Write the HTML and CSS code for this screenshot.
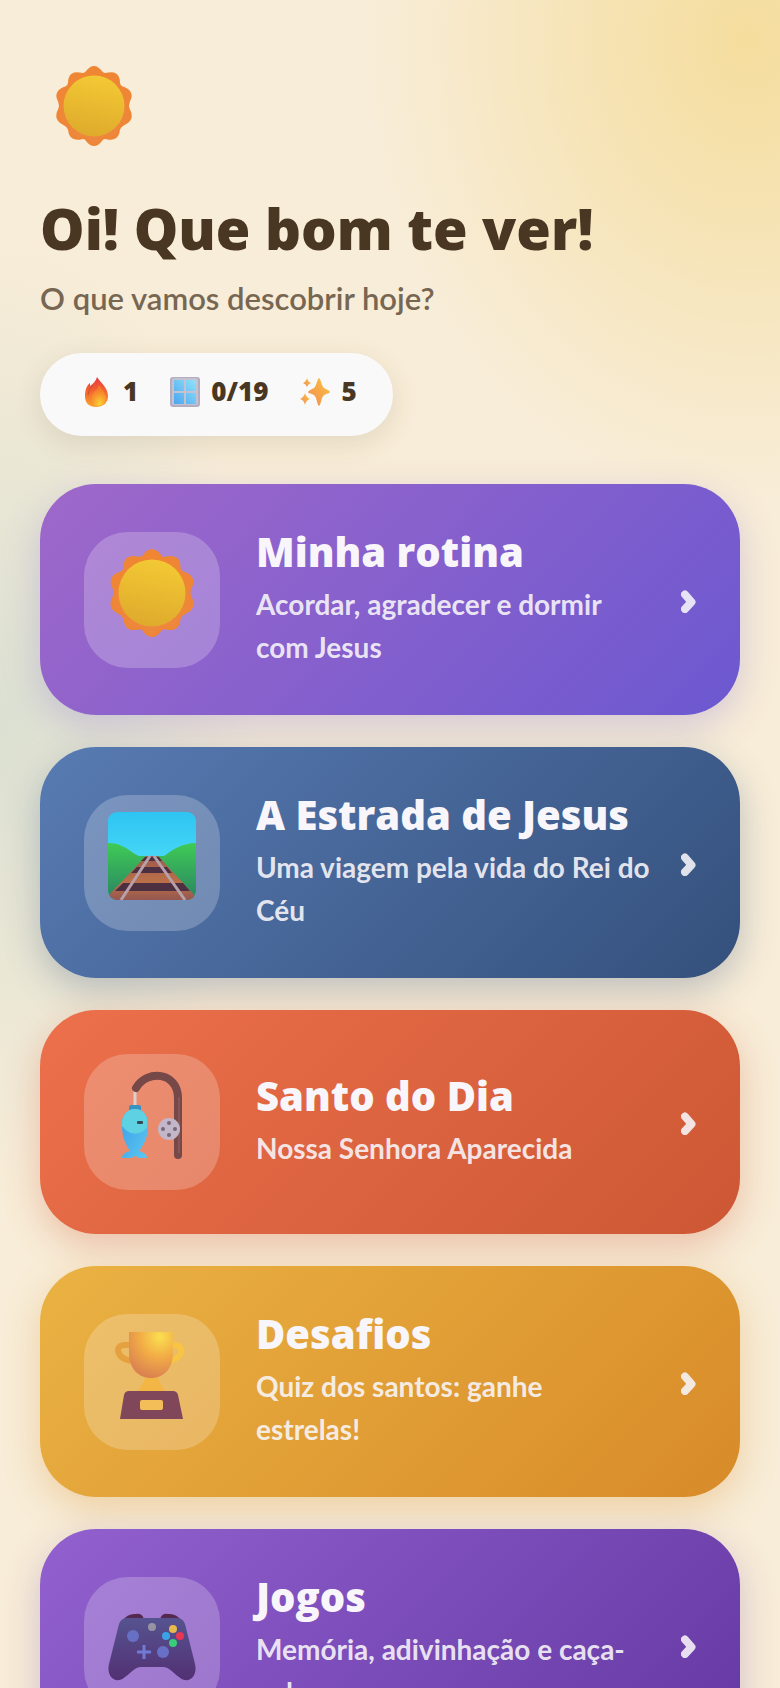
FILE: index.html
```
<!DOCTYPE html>
<html lang="pt-BR">
<head>
  <meta charset="UTF-8">
  <meta name="viewport" content="width=device-width, initial-scale=1.0">
  <title>Oi! Que bom te ver!</title>
  <link rel="stylesheet" href="styles.css">
</head>
<body>
  <!-- Shared icons -->
  <svg class="sprite" aria-hidden="true">
    <defs>
      <linearGradient id="sun-face" x1="0.6" y1="0" x2="0.4" y2="1">
        <stop offset="0" stop-color="#f3c934"/>
        <stop offset="1" stop-color="#dfaa2c"/>
      </linearGradient>
      <linearGradient id="sun-ray" x1="0" y1="0" x2="0" y2="1">
        <stop offset="0" stop-color="#f08632"/>
        <stop offset="1" stop-color="#ee873f"/>
      </linearGradient>
      <symbol id="icon-sun" viewBox="0 0 88 88">
        <path fill="url(#sun-ray)" stroke="#ef8636" stroke-width="3" stroke-linejoin="round" d="M36 7 Q44 -4 52 7 Q54 10 58 9 Q71 6 71 18 Q71 22 75 24 Q88 28 82 39 Q80 44 82 48 Q88 59 76 64 Q72 66 71 70 Q70 82 58 79 Q54 78 52 81 Q44 92 36 81 Q34 78 30 79 Q18 82 17 70 Q16 66 12 64 Q0 59 6 48 Q8 44 6 39 Q0 28 13 24 Q17 22 17 18 Q17 6 30 9 Q34 10 36 7 Z"/>
        <circle cx="44" cy="44" r="33.500" fill="url(#sun-face)"/>
      </symbol>
      <symbol id="icon-chevron" viewBox="0 0 16 28">
        <path d="M5 8.500 L11.500 16 L5 23" fill="none" stroke="currentColor" stroke-width="8" stroke-linecap="round" stroke-linejoin="round"/>
      </symbol>
    </defs>
  </svg>

  <main class="home">
    <header class="hero">
      <svg class="hero-sun" aria-hidden="true"><use href="#icon-sun"/></svg>
      <h1>Oi! Que bom te ver!</h1>
      <p class="hero-text">O que vamos descobrir hoje?</p>
      <div class="stats">
        <span class="stat">
          <svg class="stat-icon" viewBox="0 0 30 30" aria-hidden="true">
            <defs>
              <linearGradient id="flame" x1="0.5" y1="0" x2="0.5" y2="1">
                <stop offset="0" stop-color="#e8393f"/>
                <stop offset="0.6" stop-color="#f5702d"/>
                <stop offset="1" stop-color="#f9a72b"/>
              </linearGradient>
              <radialGradient id="flame-core" cx="0.6" cy="0.9" r="0.7">
                <stop offset="0" stop-color="#fdd133"/>
                <stop offset="1" stop-color="#f5782b"/>
              </radialGradient>
            </defs>
            <path d="M15 0 C19 6 26 11 26 19 C26 26 21 30 14 30 C7 30 3 26 3 19 C3 13 5 8 8 6 L8 9 C11 7 14 4 15 0 Z" fill="url(#flame)"/>
            <path d="M17 8 C20 12 24 16 24 21 C24 26 20 29 16 29 C11 29 8 26 8 22 C8 16 15 14 17 8 Z" fill="url(#flame-core)"/>
            <path d="M6 18 C6 13 10 10 11 8" fill="none" stroke="#c9502f" stroke-width="1"/>
          </svg>
          <b>1</b>
        </span>
        <span class="stat">
          <svg class="stat-icon" viewBox="0 0 30 30" aria-hidden="true">
            <defs>
              <linearGradient id="glass" x1="1" y1="0" x2="0" y2="1">
                <stop offset="0" stop-color="#8fe3fb"/>
                <stop offset="1" stop-color="#4ba5f0"/>
              </linearGradient>
            </defs>
            <rect x="0" y="0" width="30" height="30" rx="3" fill="#b3adc2"/>
            <rect x="2" y="1" width="26" height="27" rx="2" fill="#c5c2d0"/>
            <rect x="4" y="3" width="22" height="24" fill="url(#glass)"/>
            <path d="M15 3 V27 M4 15 H26" stroke="#c5c2d0" stroke-width="2"/>
          </svg>
          <b>0/19</b>
        </span>
        <span class="stat">
          <svg class="stat-icon" viewBox="0 0 30 30" aria-hidden="true">
            <defs>
              <linearGradient id="spark" x1="1" y1="0" x2="0" y2="1">
                <stop offset="0" stop-color="#fbc53e"/>
                <stop offset="1" stop-color="#f28a55"/>
              </linearGradient>
            </defs>
            <g fill="url(#spark)">
              <path d="M19 1 Q20 1 22 8 Q23 11 26 12 Q30 14 30 15 Q30 16 26 17 Q23 18 22 21 Q20 29 19 29 Q18 29 16 21 Q15 18 12 17 Q8 16 8 15 Q8 14 12 12 Q15 11 16 8 Q18 1 19 1 Z"/>
              <path d="M7 1 Q8 5 11 6 Q8 7 7 10 Q6 7 3 6 Q6 5 7 1 Z"/>
              <path d="M5 16 Q6 20 10 22 Q6 23 5 28 Q4 23 0 22 Q4 20 5 16 Z"/>
            </g>
          </svg>
          <b>5</b>
        </span>
      </div>
    </header>

    <nav class="cards">
      <a href="#rotina" class="card card-rotina">
        <span class="tile"><svg class="tile-icon" aria-hidden="true"><use href="#icon-sun"/></svg></span>
        <span class="card-text">
          <strong>Minha rotina</strong>
          <span class="card-sub">Acordar, agradecer e dormir com Jesus</span>
        </span>
        <svg class="chevron" aria-hidden="true"><use href="#icon-chevron"/></svg>
      </a>

      <a href="#estrada" class="card card-estrada">
        <span class="tile">
          <svg class="tile-icon" viewBox="0 0 88 88" aria-hidden="true">
            <defs>
              <linearGradient id="sky" x1="0" y1="0" x2="0" y2="1">
                <stop offset="0" stop-color="#2ec4f2"/>
                <stop offset="0.5" stop-color="#45d6f7"/>
              </linearGradient>
              <linearGradient id="hill" x1="0" y1="0" x2="0" y2="1">
                <stop offset="0" stop-color="#3fcb55"/>
                <stop offset="1" stop-color="#2a8363"/>
              </linearGradient>
              <linearGradient id="tie" x1="0" y1="0" x2="0" y2="1">
                <stop offset="0" stop-color="#9c5a4c"/>
                <stop offset="0.6" stop-color="#bb7048"/>
                <stop offset="1" stop-color="#95574f"/>
              </linearGradient>
              <clipPath id="scene"><rect x="0" y="0" width="88" height="88" rx="9"/></clipPath>
            </defs>
            <g clip-path="url(#scene)">
              <rect width="88" height="88" fill="url(#sky)"/>
              <path d="M0 31 C14 30 22 40 31 44 H56 C64 38 74 31 88 31 V88 H0 Z" fill="url(#hill)"/>
              <path d="M38 44 H50 L88 85 V88 H0 V84 Z" fill="url(#tie)"/>
              <path d="M37 45 H51 L54 49 H33 Z M29 55 H59 L64 61 H23 Z M15 71 H75 L82 79 H7 Z" fill="#4d2f42"/>
              <path d="M42 44 L13 88 M46 44 L77 88" stroke="#b7a0a9" stroke-width="3"/>
            </g>
          </svg>
        </span>
        <span class="card-text">
          <strong>A Estrada de Jesus</strong>
          <span class="card-sub">Uma viagem pela vida do Rei do Céu</span>
        </span>
        <svg class="chevron" aria-hidden="true"><use href="#icon-chevron"/></svg>
      </a>

      <a href="#santo" class="card card-santo">
        <span class="tile">
          <svg class="tile-icon" viewBox="0 0 88 88" aria-hidden="true">
            <defs>
              <linearGradient id="fish" x1="0" y1="0" x2="1" y2="1">
                <stop offset="0" stop-color="#3a9deb"/>
                <stop offset="1" stop-color="#5cc8ee"/>
              </linearGradient>
            </defs>
            <path d="M27 20 V36" stroke="#dcd0cf" stroke-width="3"/>
            <path d="M28 17 C39 -2 70 1 70 27 V84" fill="none" stroke="#764847" stroke-width="8" stroke-linecap="round"/>
            <path d="M71 26 V82" stroke="#865654" stroke-width="2"/>
            <circle cx="61" cy="58" r="11" fill="#c3b6c8"/>
            <g fill="#77677d">
              <circle cx="61" cy="52" r="2"/>
              <circle cx="61" cy="64" r="2"/>
              <circle cx="55" cy="58" r="2"/>
              <circle cx="67" cy="58" r="2"/>
            </g>
            <rect x="21" y="34" width="12" height="6" rx="2" fill="#3793c4"/>
            <path d="M27 38 C36 38 41 46 40 56 C40 67 35 75 31 80 C35 81 39 83 39 87 H30 Q27 83 24 87 H14 C14 83 18 81 22 80 C18 74 14 66 14 55 C13 46 18 38 27 38 Z" fill="url(#fish)"/>
            <path d="M27 38 C36 38 41 46 39 56 C34 64 22 66 14 55 C13 46 18 38 27 38 Z" fill="#5ed2e2"/>
            <rect x="29" y="50" width="6" height="3" rx="1" fill="#334b55"/>
          </svg>
        </span>
        <span class="card-text">
          <strong>Santo do Dia</strong>
          <span class="card-sub">Nossa Senhora Aparecida</span>
        </span>
        <svg class="chevron" aria-hidden="true"><use href="#icon-chevron"/></svg>
      </a>

      <a href="#desafios" class="card card-desafios">
        <span class="tile">
          <svg class="tile-icon" viewBox="0 0 88 88" aria-hidden="true">
            <defs>
              <radialGradient id="cup" cx="0.7" cy="0.1" r="0.9">
                <stop offset="0" stop-color="#fbdf50"/>
                <stop offset="0.5" stop-color="#f2ac46"/>
                <stop offset="1" stop-color="#db8350"/>
              </radialGradient>
            </defs>
            <path d="M23 14 H17 C6 14 8 27 23 30" fill="none" stroke="#e5a13f" stroke-width="6"/>
            <path d="M62 14 H67 C77 14 75 29 60 30" fill="none" stroke="#f7c444" stroke-width="6"/>
            <path d="M38 42 H49 Q50 53 58 60 H29 Q37 53 38 42 Z" fill="#f3b645"/>
            <path d="M21 1 H65 V22 C65 37 56 47 43 47 C30 47 21 37 21 22 Z" fill="url(#cup)"/>
            <path d="M21 60 H65 Q69 60 70 64 L75 88 H12 L16 64 Q17 60 21 60 Z" fill="#80465a"/>
            <rect x="32" y="69" width="23" height="10" rx="2" fill="#f3be58"/>
          </svg>
        </span>
        <span class="card-text">
          <strong>Desafios</strong>
          <span class="card-sub">Quiz dos santos: ganhe estrelas!</span>
        </span>
        <svg class="chevron" aria-hidden="true"><use href="#icon-chevron"/></svg>
      </a>

      <a href="#jogos" class="card card-jogos">
        <span class="tile">
          <svg class="tile-icon" viewBox="0 0 88 88" aria-hidden="true">
            <defs>
              <linearGradient id="pad" x1="0" y1="0" x2="0" y2="1">
                <stop offset="0" stop-color="#565390"/>
                <stop offset="1" stop-color="#523073"/>
              </linearGradient>
            </defs>
            <path d="M14 27 Q20 19 28 20 Q34 19 36 25 Z M74 27 Q68 19 60 20 Q54 19 52 25 Z" fill="#54284f"/>
            <path d="M19 24 H69 Q75 24 77 30 L87 70 C90 83 80 91 71 83 C65 79 61 73 55 73 H33 C27 73 23 79 17 83 C8 91 -2 83 1 70 L11 30 Q13 24 19 24 Z" fill="url(#pad)"/>
            <circle cx="25" cy="42" r="6" fill="#6870c6"/>
            <circle cx="55" cy="58" r="6" fill="#6870c6"/>
            <circle cx="44" cy="33" r="4" fill="#9893a2"/>
            <path d="M36 51 V65 M29 58 H43" stroke="#727bd4" stroke-width="3"/>
            <circle cx="65" cy="35" r="4" fill="#e8b84c"/>
            <circle cx="58" cy="42" r="4" fill="#3ba2e5"/>
            <circle cx="72" cy="42" r="4" fill="#e63654"/>
            <circle cx="65" cy="49" r="4" fill="#39cd79"/>
          </svg>
        </span>
        <span class="card-text">
          <strong>Jogos</strong>
          <span class="card-sub">Memória, adivinhação e caça-palavras</span>
        </span>
        <svg class="chevron" aria-hidden="true"><use href="#icon-chevron"/></svg>
      </a>
    </nav>
  </main>
</body>
</html>
```
FILE: styles.css
```
* {
  box-sizing: border-box;
}

body {
  margin: 0;
  font-family: Lato, "Open Sans", sans-serif;
  font-variant-ligatures: none;
  color: #4a3723;
  background:
    radial-gradient(380px 460px at 96% 40px, #f5dd9d 0, rgba(245, 221, 157, 0) 100%),
    radial-gradient(260px 480px at 0 720px, #dbe0d2 0, rgba(219, 224, 210, 0) 100%),
    #f8edd8;
}

.sprite {
  position: absolute;
  width: 0;
  height: 0;
}

.home {
  padding: 66px 40px 40px;
}

/* Header */
.hero {
  display: flex;
  flex-direction: column;
  align-items: flex-start;
}

.hero-sun {
  width: 80px;
  height: 80px;
  margin-left: 14px;
}

h1 {
  margin: 46px 0 0;
  font-family: "Open Sans", sans-serif;
  font-size: 56px;
  line-height: 72px;
  font-weight: 800;
}

.hero-text {
  margin: 13px 0 0;
  font-size: 31px;
  line-height: 42px;
  font-weight: 600;
  color: #766652;
}

.stats {
  display: flex;
  gap: 32px;
  margin-top: 34px;
  padding: 20px 36px 26px 42px;
  border-radius: 42px;
  background: #f9f9f9;
  box-shadow: 0 8px 28px rgba(74, 55, 35, 0.12);
}

.stat {
  display: flex;
  align-items: center;
  gap: 11px;
  font-family: "Open Sans", sans-serif;
  font-size: 26px;
  line-height: 37px;
}

.stat b {
  font-weight: 800;
}

.stat-icon {
  width: 30px;
  height: 30px;
}

/* Cards */
.cards {
  display: flex;
  flex-direction: column;
  gap: 32px;
  margin-top: 48px;
}

.card {
  display: flex;
  align-items: center;
  gap: 36px;
  padding: 44px;
  border-radius: 56px;
  color: #f8f6fa;
  text-decoration: none;
}

.card-rotina {
  background: linear-gradient(135deg, #9f68ca, #6c58d0);
  box-shadow: 0 12px 36px rgba(108, 88, 208, 0.25);
}

.card-estrada {
  background: linear-gradient(135deg, #587bb3, #34507c);
  box-shadow: 0 12px 36px rgba(52, 80, 124, 0.3);
}

.card-santo {
  background: linear-gradient(135deg, #ec704b, #cd5734);
  box-shadow: 0 12px 36px rgba(205, 87, 52, 0.3);
}

.card-desafios {
  background: linear-gradient(135deg, #eab243, #d88b29);
  box-shadow: 0 12px 36px rgba(216, 139, 41, 0.3);
}

.card-jogos {
  background: linear-gradient(135deg, #9261cf, #6438a3);
  box-shadow: 0 12px 36px rgba(100, 56, 163, 0.25);
}

.tile {
  display: flex;
  flex: none;
  align-items: center;
  justify-content: center;
  width: 136px;
  height: 136px;
  padding-bottom: 14px;
  border-radius: 44px;
  background: rgba(255, 255, 255, 0.22);
}

.tile-icon {
  width: 88px;
  height: 88px;
}

.card-text {
  flex: 1;
  display: flex;
  flex-direction: column;
  padding-bottom: 2px;
}

.card-text strong {
  font-family: "Open Sans", sans-serif;
  font-size: 40px;
  line-height: 48px;
  font-weight: 800;
}

.card-sub {
  margin-top: 7px;
  font-size: 28px;
  line-height: 43px;
  font-weight: 700;
  color: rgba(248, 246, 250, 0.9);
}

.chevron {
  flex: none;
  width: 16px;
  height: 28px;
  margin-left: -7px;
  opacity: 0.88;
}
```
